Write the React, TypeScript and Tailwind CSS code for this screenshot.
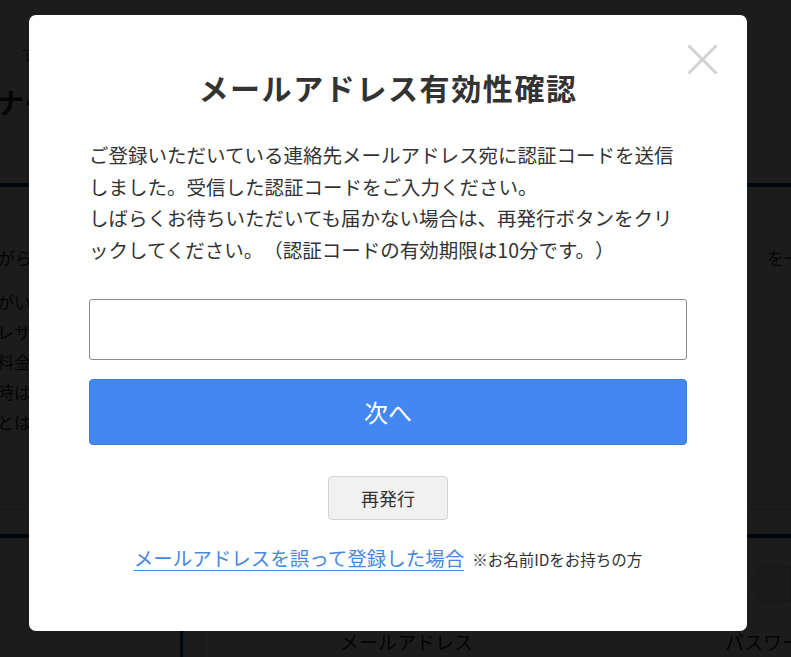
import React from "react";

const font = "font-['Noto_Sans_CJK_JP','Noto_Sans',sans-serif]";

const BackgroundPage = () => (
  <div className="h-[657px] overflow-hidden bg-white text-[#2a2a2a]">
    {/* Header */}
    <div className="h-[183px] pt-[44px]">
      <div className="pl-[21px] text-[15px] text-[#1d4f9a] leading-[20px]">す</div>
      <div className="-ml-[4px] mt-[20px] text-[28px] font-bold leading-[36px] whitespace-nowrap">ナー</div>
    </div>
    <div className="h-[4px] bg-[#0b3f86]" />

    {/* Content */}
    <div className="flex justify-between pt-[56px] text-[17px] leading-[30px] whitespace-nowrap">
      <span className="-ml-[2px]">がら2</span>
      <span className="mr-[-10px]">を一</span>
    </div>
    <div className="mt-[14px] flex flex-col text-[17px] leading-[30px] whitespace-nowrap">
      <span className="-ml-[3px]">がいて</span>
      <span className="-ml-[3px]">レサー</span>
      <span className="-ml-[3px]">料金を</span>
      <span className="-ml-[3px]">時は</span>
      <span className="-ml-[3px]">とは対</span>
    </div>
    <div className="mt-[72px] h-[1px] bg-[#d8d8d8]" />
    <div className="mt-[24px] h-[4px] bg-[#0b3f86]" />

    {/* Lower form */}
    <div className="flex h-[120px]">
      <div className="w-[180px] shrink-0" />
      <div className="w-[3px] shrink-0 bg-[#0b3f86] mt-[60px]" />
      <div className="w-[19px] shrink-0 bg-[#f5f5f5] mt-[60px]" />
      <div className="w-[3px] shrink-0 bg-[#e0e0e0] mt-[60px]" />
      <div className="flex-1 min-w-0 flex flex-col">
        <div className="flex justify-end pt-[28px]">
          <div className="w-[40px] h-[36px] rounded-l-full bg-[#eeeeee] border border-[#cccccc]" />
        </div>
        <div className="flex pl-[135px] pt-[28px] text-[19px] leading-[24px] whitespace-nowrap">
          <span className="shrink-0">メールアドレス</span>
          <span className="shrink-0 ml-[252px]">パスワード</span>
        </div>
      </div>
    </div>
  </div>
);

const CloseIcon = () => (
  <svg width="31" height="31" viewBox="0 0 31 31" fill="none">
    <path d="M1.5 1.5 L29.5 29.5 M29.5 1.5 L1.5 29.5" stroke="#d2d2d2" strokeWidth="3" />
  </svg>
);

export default function App() {
  return (
    <div className={`relative w-[791px] h-[657px] overflow-hidden ${font}`}>
      <BackgroundPage />

      {/* Overlay */}
      <div className="absolute inset-0 bg-black/[0.89]" />

      {/* Modal */}
      <div className="absolute left-[29px] top-[15px] w-[718px] h-[616px] rounded-[7px] bg-white px-[60px] pt-[50px] text-[#333] [text-spacing-trim:space-all]">
        <button className="absolute right-[29px] top-[29px]">
          <CloseIcon />
        </button>

        <h2 className="text-center text-[30px] font-bold leading-[45px] tracking-[1.6px] text-[#333]">
          メールアドレス有効性確認
        </h2>

        <p className="mt-[29px] text-[19.5px] leading-[31.5px] text-[#333]">
          ご登録いただいている連絡先メールアドレス宛に認証コードを送信しました。受信した認証コードをご入力ください。
          <br />
          しばらくお待ちいただいても届かない場合は、再発行ボタンをクリックしてください。（認証コードの有効期限は10分です。）
        </p>

        <input
          type="text"
          className="mt-[34px] block w-full h-[61px] rounded-[3px] border border-[#8c8c8c] px-3 text-[19px] outline-none"
        />

        <button className="mt-[19px] flex w-full h-[66px] items-center justify-center rounded-[4px] border border-[#3b7de0] bg-[#4487f1] text-[24px] text-white">
          次へ
        </button>

        <div className="mt-[31px] flex justify-center">
          <button className="w-[120px] h-[44px] rounded-[4px] border border-[#d4d4d4] bg-[#f1f1f1] text-[18px] text-[#333]">
            再発行
          </button>
        </div>

        <div className="mt-[24px] flex items-baseline justify-center whitespace-nowrap">
          <a href="#" className="text-[19.5px] leading-[28px] text-[#4a86dc] underline underline-offset-[4px]">
            メールアドレスを誤って登録した場合
          </a>
          <span className="ml-[8px] text-[15.5px] text-[#333]">※お名前IDをお持ちの方</span>
        </div>
      </div>
    </div>
  );
}
